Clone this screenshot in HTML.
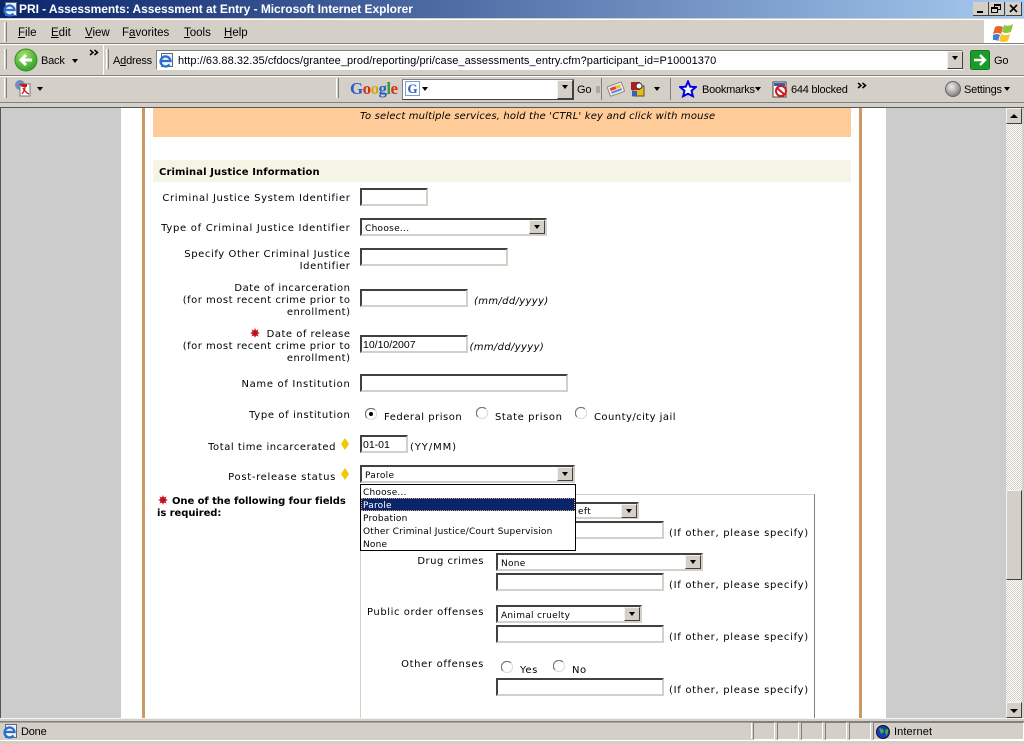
<!DOCTYPE html>
<html><head><meta charset="utf-8"><title>PRI - Assessments: Assessment at Entry - Microsoft Internet Explorer</title>
<style>
html,body{margin:0;padding:0;width:1024px;height:744px;overflow:hidden;background:#d4d0c8}
div,span,svg{position:absolute}
u{text-decoration:underline}
.t{font:10px/12px "DejaVu Sans",sans-serif;letter-spacing:.58px;color:#000;white-space:nowrap;margin-top:2px}
.r{text-align:right;width:240px}
.i{font-style:italic;letter-spacing:.35px}
.b{font-weight:bold}
.d{font-size:9px;letter-spacing:.2px;margin-top:1px}
.o{letter-spacing:.7px}
.u{font:11.500px/14px "Liberation Sans",sans-serif;color:#000;white-space:nowrap}
.k{font-size:11px;letter-spacing:-.2px;margin-top:1px}
.in{background:#fff;border:2px solid;border-color:#404040 #d4d0c8 #d4d0c8 #404040;box-sizing:border-box}
.in .v{position:absolute;left:1px;top:2px;font:10.500px/13px "Liberation Sans",sans-serif;white-space:nowrap}
.in .s{position:absolute;left:3px;top:3px;font:9px/13px "DejaVu Sans",sans-serif;letter-spacing:.28px;white-space:nowrap}
.ar,.bt{background:#d4d0c8;border:1px solid;border-color:#f4f2ee #404040 #404040 #f4f2ee;box-sizing:border-box}
.ar{right:0;top:0;width:16px;height:14px}
.ar:after,.tri:after{content:"";position:absolute;border:3.5px solid transparent;border-top:4px solid #000;border-bottom:0}
.ar:after{left:4px;top:4px}
.tri{width:7px;height:4px}
.sep{width:1px;height:20px;border-left:1px solid #fff;border-right:1px solid #808080}
.hl{height:1px;background:#808080}
.gr{height:1px;background:#fff}
.sb{top:722px;height:18px;width:22px;border:1px solid;border-color:#808080 #fff #fff #808080;box-sizing:border-box}
</style></head>
<body>
<svg width="0" height="0" style="left:0;top:0"><defs>
<g id="ie"><rect x="3.500" y="1.500" width="11" height="13" fill="#eef2fa" stroke="#667"/><path d="M2 9h10.500A5 5 0 1 0 11.500 12.500" fill="none" stroke="#2a6fd0" stroke-width="2.300"/></g>
<g id="rd"><circle cx="6" cy="6" r="5.500" fill="#fff"/><path d="M2 10A5.500 5.500 0 0 1 10 2" fill="none" stroke="#777" stroke-width="1.200"/><path d="M2 10A5.500 5.500 0 0 0 10 2" fill="none" stroke="#ddd" stroke-width="1.200"/></g>
<g id="st"><path d="M5 0l1 2.500L8.500 1.500 7.500 4 10 5 7.500 6l1 2.500L6 7.500 5 10 4 7.500 1.500 8.500 2.500 6 0 5l2.500-1-1-2.500L4 2.500z" fill="#c01020"/></g>
<g id="ch"><path d="M1 1l3 2.500-3 2.500M5.500 1l3 2.500-3 2.500" fill="none" stroke="#000" stroke-width="1.500"/></g>
</defs></svg>
<!-- title bar -->
<div style="left:0;top:0;width:1024px;height:18px;background:linear-gradient(90deg,#0a246a,#a6caf0)"></div>
<svg style="left:2px;top:1px" width="16" height="16"><use href="#ie"/></svg>
<div style="left:19px;top:2px;color:#fff;font:bold 12px/14px 'Liberation Sans',sans-serif;letter-spacing:-.05px;white-space:nowrap">PRI - Assessments: Assessment at Entry - Microsoft Internet Explorer</div>
<div style="left:973px;top:2px;width:16px;height:14px;background:#d4d0c8;border-right:1px solid #404040;border-bottom:1px solid #404040;box-sizing:border-box"><div style="left:4px;top:9px;width:6px;height:2px;background:#000"></div></div>
<div style="left:989px;top:2px;width:16px;height:14px;background:#d4d0c8;border-right:1px solid #404040;border-bottom:1px solid #404040;box-sizing:border-box"><div style="left:5px;top:2px;width:7px;height:6px;border:1px solid #000;border-top-width:2px;box-sizing:border-box"></div><div style="left:2px;top:5px;width:7px;height:6px;border:1px solid #000;border-top-width:2px;box-sizing:border-box;background:#d4d0c8"></div></div>
<div style="left:1006px;top:2px;width:16px;height:14px;background:#d4d0c8;border-right:1px solid #404040;border-bottom:1px solid #404040;box-sizing:border-box"><svg style="left:3px;top:2px" width="9" height="9"><path d="M1 1l7 7M8 1l-7 7" stroke="#000" stroke-width="1.600"/></svg></div>

<!-- rebars -->
<div class="gr" style="left:0;top:19px;width:1024px"></div>
<div class="hl" style="left:0;top:43px;width:1024px"></div><div class="gr" style="left:0;top:44px;width:1024px"></div>
<div class="hl" style="left:0;top:75px;width:1024px"></div><div class="gr" style="left:0;top:76px;width:1024px"></div>
<div class="hl" style="left:0;top:102px;width:1024px"></div>
<div class="sep" style="left:4px;top:22px"></div>
<div class="u" style="left:18px;top:26px"><u>F</u>ile</div>
<div class="u" style="left:51px;top:26px"><u>E</u>dit</div>
<div class="u" style="left:85px;top:26px"><u>V</u>iew</div>
<div class="u" style="left:122px;top:26px">F<u>a</u>vorites</div>
<div class="u" style="left:184px;top:26px"><u>T</u>ools</div>
<div class="u" style="left:224px;top:26px"><u>H</u>elp</div>
<div style="left:984px;top:20px;width:40px;height:23px;background:#fff"></div>
<svg style="left:993px;top:21px" width="22" height="21"><path d="M2 6q4-2 8 0l-2 7q-4-2-8 0z" fill="#e8632a"/><path d="M11 4q4 2 9-1l-2 8q-5 2-9 0z" fill="#8cc63f"/><path d="M0 14q4-2 7 0l-2 6q-3-2-7 0z" fill="#3d82d8"/><path d="M8 13q4 2 9 0l-2 7q-5 2-9 0z" fill="#f8c52a"/></svg>

<!-- back row -->
<div class="sep" style="left:4px;top:49px"></div>
<svg style="left:14px;top:48px" width="24" height="24"><defs><radialGradient id="g" cx=".4" cy=".3" r=".8"><stop offset="0" stop-color="#a4e36a"/><stop offset="1" stop-color="#1f9a1c"/></radialGradient></defs><circle cx="12" cy="12" r="11" fill="url(#g)" stroke="#3c8c2c"/><path d="M18 12H7M12 7l-5 5 5 5" fill="none" stroke="#fff" stroke-width="3"/></svg>
<div class="u k" style="left:41px;top:53px">Back</div>
<div class="tri" style="left:72px;top:59px"></div>
<svg style="left:89px;top:49px" width="10" height="8"><use href="#ch"/></svg>
<div style="left:103px;top:44px;width:1px;height:31px;background:#fff"></div>
<div class="sep" style="left:106px;top:49px"></div>
<div class="u k" style="left:113px;top:53px">A<u>d</u>dress</div>
<div style="left:156px;top:50px;width:807px;height:20px;background:#fff;border:1px solid;border-color:#808080 #fff #fff #808080;box-sizing:border-box"></div>
<svg style="left:158px;top:52px" width="16" height="16"><use href="#ie"/></svg>
<div class="u" style="left:178px;top:54px;font-size:11px;letter-spacing:.06px">http://63.88.32.35/cfdocs/grantee_prod/reporting/pri/case_assessments_entry.cfm?participant_id=P10001370</div>
<div class="ar" style="left:947px;top:51px;width:16px;height:18px"></div>
<svg style="left:970px;top:50px" width="20" height="20"><rect x=".5" y=".5" width="19" height="19" rx="2" fill="#1d9a2c" stroke="#0f7a1c"/><path d="M4 10h11M10 5l5 5-5 5" fill="none" stroke="#fff" stroke-width="2.400"/></svg>
<div class="u k" style="left:994px;top:53px">Go</div>

<!-- google row -->
<div class="sep" style="left:4px;top:78px"></div>
<svg style="left:14px;top:79px" width="18" height="18"><circle cx="6" cy="6" r="5" fill="#6d8fc9"/><rect x="6" y="5" width="10" height="12" fill="#fff" stroke="#777"/><path d="M5 5h8v3H8z" fill="#d01818"/><path d="M9 9q3 5 6 6M8 15q3-4 3-7" stroke="#d01818" fill="none" stroke-width="1.300"/></svg>
<div class="tri" style="left:37px;top:87px"></div>
<div class="sep" style="left:336px;top:78px"></div>
<div style="left:350px;top:79px;font:bold 17px/20px 'Liberation Serif',serif;letter-spacing:-.6px;white-space:nowrap"><span style="position:static;color:#2a5fc4">G</span><span style="position:static;color:#d0301c">o</span><span style="position:static;color:#d9a412">o</span><span style="position:static;color:#2a5fc4">g</span><span style="position:static;color:#3a9a34">l</span><span style="position:static;color:#d0301c">e</span></div>
<div style="left:402px;top:79px;width:172px;height:21px;background:#fff;border:1px solid;border-color:#808080 #404040 #404040 #808080;box-sizing:border-box"></div>
<div style="left:405px;top:81px;width:15px;height:15px;border:1px solid #7a9fd0;box-sizing:border-box;font:bold 13px/13px 'Liberation Serif',serif;color:#2a5fc4;text-align:center">G</div>
<div class="tri" style="left:422px;top:87px"></div>
<div class="ar" style="left:557px;top:80px;width:16px;height:19px"></div>
<div class="u k" style="left:577px;top:82px">Go</div>
<div style="left:596px;top:86px;width:4px;height:7px;background:#aaa"></div><div style="left:601px;top:78px;width:1px;height:22px;background:#808080"></div>
<svg style="left:607px;top:80px" width="18" height="17"><g transform="rotate(-20 9 8)"><rect x="1" y="4" width="15" height="10" rx="1" fill="#f4f0e8" stroke="#888"/><rect x="3" y="6" width="6" height="3" fill="#e04040"/><rect x="9" y="6" width="5" height="3" fill="#e8c030"/><rect x="3" y="10" width="11" height="2" fill="#6080d8"/></g></svg>
<svg style="left:630px;top:80px" width="18" height="18"><rect x="3" y="6" width="11" height="10" fill="#e8b820" stroke="#605018"/><rect x="1" y="2" width="9" height="8" fill="#b02020"/><circle cx="9" cy="6" r="3" fill="#fff" stroke="#333"/><rect x="2" y="11" width="5" height="5" fill="#3060c0"/></svg>
<div class="tri" style="left:654px;top:87px"></div>
<div class="sep" style="left:670px;top:78px;height:22px;border-right:0;border-left:1px solid #808080"></div>
<svg style="left:679px;top:80px" width="18" height="18"><path d="M9 1.500l2.200 5.200 5.600.4-4.300 3.600 1.400 5.500L9 13.700l-4.900 2.500 1.400-5.500L1.200 7.100l5.600-.4z" fill="#fff" stroke="#0000e0" stroke-width="2"/></svg>
<div class="u k" style="left:702px;top:82px;letter-spacing:-.25px">Bookmarks</div>
<div class="tri" style="left:755px;top:87px"></div>
<svg style="left:772px;top:81px" width="17" height="17"><rect x="1" y="1" width="13" height="15" fill="#fff" stroke="#444"/><rect x="2" y="2" width="11" height="3" fill="#3060c0"/><circle cx="9" cy="10" r="5" fill="none" stroke="#d01818" stroke-width="2"/><path d="M5 7l8 7" stroke="#d01818" stroke-width="2"/></svg>
<div class="u k" style="left:791px;top:82px;letter-spacing:-.25px">644 blocked</div>
<svg style="left:857px;top:82px" width="10" height="8"><use href="#ch"/></svg>
<svg style="left:945px;top:81px" width="16" height="16"><defs><radialGradient id="s" cx=".4" cy=".35" r=".7"><stop offset="0" stop-color="#eee"/><stop offset="1" stop-color="#777"/></radialGradient></defs><circle cx="8" cy="8" r="7.500" fill="url(#s)" stroke="#666"/></svg>
<div class="u k" style="left:964px;top:82px;letter-spacing:-.25px">Settings</div>
<div class="tri" style="left:1004px;top:87px"></div>

<!-- viewport -->
<div style="left:0;top:104px;width:1024px;height:3px;background:#d4d0c8"></div>
<div style="left:0;top:107px;width:1024px;height:1px;background:#555"></div>
<div style="left:0;top:108px;width:1006px;height:610px;background:#ccc;overflow:hidden">
 <div style="left:0;top:0;width:1px;height:610px;background:#555"></div>
 <div style="left:121px;top:0;width:765px;height:610px;background:#fff"></div>
 <div style="left:142px;top:0;width:3px;height:610px;background:#cc9966"></div>
 <div style="left:859px;top:0;width:3px;height:610px;background:#cc9966"></div>
 <div style="left:153px;top:0;width:698px;height:29px;background:#ffcc99"></div>
 <div style="left:153px;top:52px;width:698px;height:22px;background:#f5f5e6"></div>
</div>
<!-- scrollbar -->
<div style="left:1006px;top:108px;width:16px;height:610px;background:repeating-conic-gradient(#fff 0 25%,#d4d0c8 0 50%) 0 0/2px 2px"></div>
<div class="bt" style="left:1006px;top:108px;width:16px;height:16px"></div>
<svg style="left:1009px;top:113px" width="10" height="6"><path d="M1 5h8L5 1z" fill="#000"/></svg>
<div class="bt" style="left:1006px;top:490px;width:16px;height:90px"></div>
<div class="bt" style="left:1006px;top:702px;width:16px;height:16px"></div>
<svg style="left:1009px;top:708px" width="10" height="6"><path d="M1 1h8L5 5z" fill="#000"/></svg>

<!-- page content -->
<div class="t i" style="left:360px;top:109px;letter-spacing:.17px">To select multiple services, hold the 'CTRL' key and click with mouse</div>
<div class="t b" style="left:159px;top:165px;letter-spacing:.1px">Criminal Justice Information</div>

<div class="t r" style="left:110.500px;top:191px;letter-spacing:.64px">Criminal Justice System Identifier</div>
<div class="in" style="left:360px;top:188px;width:68px;height:18px"></div>
<div class="t r" style="left:110.500px;top:221px;letter-spacing:.7px">Type of Criminal Justice Identifier</div>
<div class="in" style="left:360px;top:218px;width:187px;height:18px"><span class="s">Choose...</span><div class="ar"></div></div>
<div class="t r" style="left:110.500px;top:247px">Specify Other Criminal Justice<br>Identifier</div>
<div class="in" style="left:360px;top:248px;width:148px;height:18px"></div>
<div class="t r" style="left:110.500px;top:281px;letter-spacing:.5px">Date of incarceration<br>(for most recent crime prior to<br>enrollment)</div>
<div class="in" style="left:360px;top:289px;width:108px;height:18px"></div>
<div class="t i" style="left:474px;top:294px">(mm/dd/yyyy)</div>
<div class="t r" style="left:110.500px;top:327px;letter-spacing:.5px">Date of release<br>(for most recent crime prior to<br>enrollment)</div>
<svg style="left:250px;top:328px" width="10" height="10"><use href="#st"/></svg>
<div class="in" style="left:360px;top:335px;width:108px;height:18px"><span class="v">10/10/2007</span></div>
<div class="t i" style="left:469.500px;top:340px">(mm/dd/yyyy)</div>
<div class="t r" style="left:110.500px;top:377px;letter-spacing:.68px">Name of Institution</div>
<div class="in" style="left:360px;top:374px;width:208px;height:18px"></div>
<div class="t r" style="left:110.500px;top:408px;letter-spacing:.63px">Type of institution</div>

<svg style="left:365px;top:408px" width="12" height="12"><use href="#rd"/><circle cx="6" cy="6" r="2" fill="#000"/></svg>
<div class="t" style="left:384px;top:410px;letter-spacing:.52px">Federal prison</div>
<svg style="left:476px;top:407px" width="12" height="12"><use href="#rd"/></svg>
<div class="t" style="left:495px;top:410px">State prison</div>
<svg style="left:575px;top:407px" width="12" height="12"><use href="#rd"/></svg>
<div class="t" style="left:594px;top:410px;letter-spacing:.45px">County/city jail</div>

<div class="t r" style="left:96px;top:440px;letter-spacing:.55px">Total time incarcerated</div>
<svg style="left:341px;top:438px" width="8" height="12"><path d="M4 0l4 6-4 6-4-6z" fill="#f4c800"/></svg>
<div class="in" style="left:360px;top:435px;width:48px;height:18px"><span class="v">01-01</span></div>
<div class="t" style="left:410px;top:440px;letter-spacing:.9px">(YY/MM)</div>
<div class="t r" style="left:96px;top:470px;letter-spacing:.68px">Post-release status</div>
<svg style="left:341px;top:468px" width="8" height="12"><path d="M4 0l4 6-4 6-4-6z" fill="#f4c800"/></svg>
<div class="in" style="left:360px;top:465px;width:215px;height:18px"><span class="s">Parole</span><div class="ar"></div></div>

<svg style="left:158px;top:495px" width="10" height="10"><use href="#st"/></svg>
<div class="t b" style="left:172px;top:494px;letter-spacing:-.07px">One of the following four fields</div>
<div class="t b" style="left:157px;top:506px;letter-spacing:-.07px">is required:</div>

<!-- nested box -->
<div style="left:360px;top:494px;width:455px;height:224px;border-top:1px solid #d4d0c8;border-left:1px solid #d4d0c8;border-right:1px solid #808080;box-sizing:border-box"></div>
<div class="in" style="left:560px;top:502px;width:79px;height:17px"><span class="s" style="left:16px;top:2px">eft</span><div class="ar"></div></div>
<div class="in" style="left:496px;top:521px;width:168px;height:18px"></div>
<div class="t o" style="left:669px;top:526px">(If other, please specify)</div>
<div class="t r" style="left:244px;top:554px;letter-spacing:.5px">Drug crimes</div>
<div class="in" style="left:496px;top:553px;width:207px;height:18px"><span class="s">None</span><div class="ar"></div></div>
<div class="in" style="left:496px;top:573px;width:168px;height:18px"></div>
<div class="t o" style="left:669px;top:578px">(If other, please specify)</div>
<div class="t r" style="left:244px;top:605px">Public order offenses</div>
<div class="in" style="left:496px;top:605px;width:146px;height:18px"><span class="s">Animal cruelty</span><div class="ar"></div></div>
<div class="in" style="left:496px;top:625px;width:168px;height:18px"></div>
<div class="t o" style="left:669px;top:630px">(If other, please specify)</div>
<div class="t r" style="left:244px;top:657px;letter-spacing:.65px">Other offenses</div>
<svg style="left:501px;top:661px" width="12" height="12"><use href="#rd"/></svg>
<div class="t" style="left:520px;top:663px">Yes</div>
<svg style="left:553px;top:660px" width="12" height="12"><use href="#rd"/></svg>
<div class="t" style="left:572px;top:663px">No</div>
<div class="in" style="left:496px;top:678px;width:168px;height:18px"></div>
<div class="t o" style="left:669px;top:683px">(If other, please specify)</div>

<!-- dropdown list -->
<div style="left:360px;top:484px;width:216px;height:67px;background:#fff;border:1px solid #000;box-sizing:border-box"></div>
<div style="left:361px;top:498px;width:214px;height:13px;background:#0a246a;outline:1px dotted #e0a070;outline-offset:-1px"></div>
<div class="t d" style="left:363px;top:486px">Choose...</div>
<div class="t d" style="left:363px;top:499px;color:#fff">Parole</div>
<div class="t d" style="left:363px;top:512px">Probation</div>
<div class="t d" style="left:363px;top:525px">Other Criminal Justice/Court Supervision</div>
<div class="t d" style="left:363px;top:538px">None</div>

<!-- status bar -->
<div style="left:0;top:718px;width:1024px;height:1px;background:#f4f2ee"></div>
<div style="left:0;top:721px;width:1024px;height:1px;background:#808080"></div>
<div style="left:0;top:722px;width:1024px;height:1px;background:#a8a49c"></div>
<div style="left:0;top:740px;width:1024px;height:1px;background:#fff"></div>
<svg style="left:2px;top:723px" width="16" height="16"><use href="#ie"/></svg>
<div class="u k" style="left:21px;top:724px">Done</div>
<div style="left:751px;top:723px;width:1px;height:16px;background:#fff"></div>
<div class="sb" style="left:753px"></div>
<div class="sb" style="left:777px"></div>
<div class="sb" style="left:801px"></div>
<div class="sb" style="left:825px"></div>
<div class="sb" style="left:849px"></div>
<div class="sb" style="left:873px;width:151px"></div>
<svg style="left:876px;top:725px" width="14" height="14"><circle cx="7" cy="7" r="6.500" fill="#1838c8" stroke="#111"/><path d="M3 3l4 1 1 3-3 2zM9 5l3-1 0 4-2 3z" fill="#40b030"/></svg>
<div class="u k" style="left:894px;top:724px;letter-spacing:.1px">Internet</div>
</body></html>
